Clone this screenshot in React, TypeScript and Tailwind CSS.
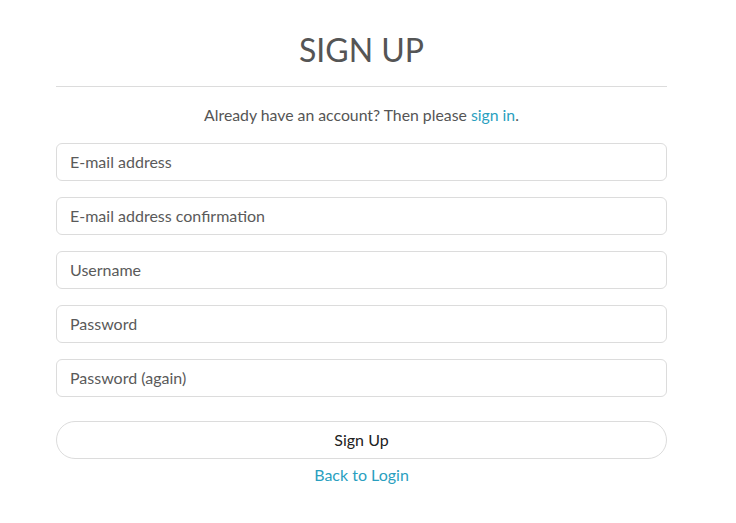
import React from 'react';

const fields = [
  'E-mail address',
  'E-mail address confirmation',
  'Username',
  'Password',
  'Password (again)',
];

const App: React.FC = () => {
  return (
    <div className="min-h-[523px] bg-white font-['Lato','Open_Sans',sans-serif] text-[#555]">
      <div className="ml-[56px] w-[611px] pt-[31px]">
        {/* Titre */}
        <h1 className="text-center text-[32px] leading-[38px] font-normal text-[#555]">SIGN UP</h1>
        <hr className="mt-[17px] border-t border-[#dcdcdc]" />

        <p className="mt-[16px] text-center text-[15.8px] leading-6">
          Already have an account? Then please{' '}
          <a href="#" className="text-[#2a9fbf]">sign in</a>.
        </p>

        {/* Champs */}
        <form className="mt-[16px] flex flex-col gap-4" onSubmit={(e) => e.preventDefault()}>
          {fields.map((label) => (
            <input
              key={label}
              type="text"
              placeholder={label}
              className="h-[38px] w-full rounded-[6px] border border-[#dcdcdc] px-[13px] pb-[2px] text-[16px] text-[#555] placeholder:text-[#5a5a5a] outline-none"
            />
          ))}
          <button
            type="submit"
            className="mt-2 h-[38px] w-full rounded-full border border-[#dcdcdc] bg-white text-[16px] text-[#222]"
          >
            Sign Up
          </button>
        </form>

        <div className="mt-[4px] text-center text-[16px] leading-6">
          <a href="#" className="text-[#2a9fbf]">Back to Login</a>
        </div>
      </div>
    </div>
  );
};

export default App;
